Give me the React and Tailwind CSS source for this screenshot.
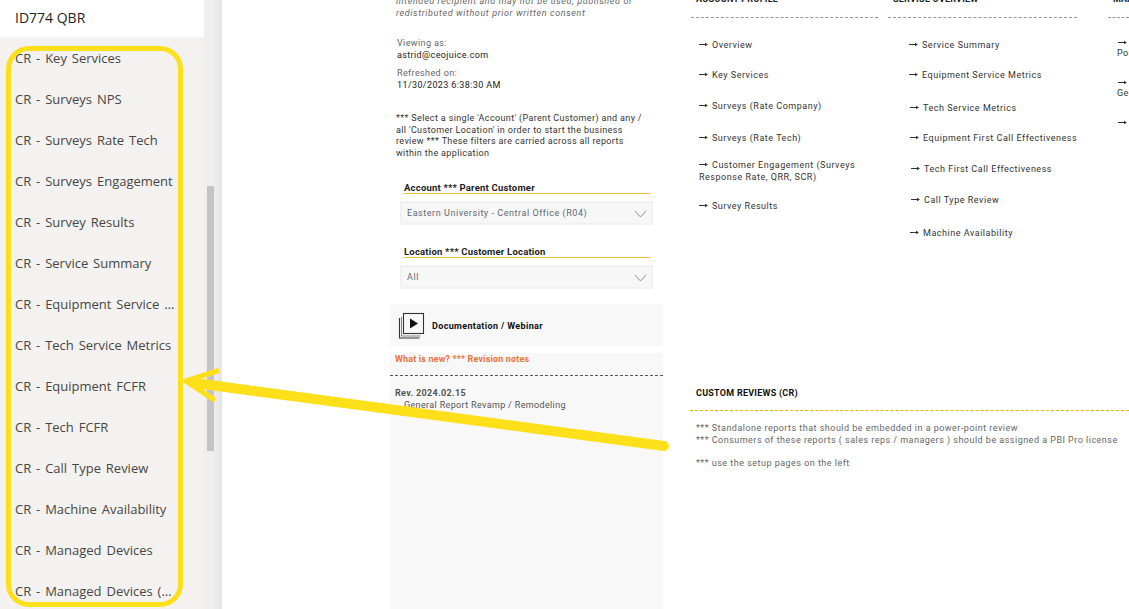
const items = ["CR - Key Services","CR - Surveys NPS","CR - Surveys Rate Tech","CR - Surveys Engagement","CR - Survey Results","CR - Service Summary","CR - Equipment Service Metrics","CR - Tech Service Metrics","CR - Equipment FCFR","CR - Tech FCFR","CR - Call Type Review","CR - Machine Availability","CR - Managed Devices","CR - Managed Devices (Detail)"];

const din = { fontFamily: '"Roboto", "Liberation Sans", sans-serif' };

function Arrow() {
  return (
    <svg width="9" height="5" viewBox="0 0 9 5" className="inline-block align-[1px]">
      <path d="M0 2.5h7" stroke="#333" strokeWidth="1" />
      <path d="M6 0.7L9 2.5L6 4.3z" fill="#333" />
    </svg>
  );
}

function Link({ text, mt, ml = 0, w }) {
  return (
    <div className="text-[9px] leading-[12px] text-[#333] tracking-[0.52px]" style={{ marginTop: mt, marginLeft: ml, width: w }}>
      <Arrow /><span className="ml-[4px]">{text}</span>
    </div>
  );
}

function Chevron() {
  return (
    <svg width="13" height="8" viewBox="0 0 13 8" className="shrink-0" fill="none" stroke="#7f8a96" strokeWidth="0.9">
      <path d="M1 1l5.5 6 5.5-6" />
    </svg>
  );
}

function Filter({ label, value, mt }) {
  return (
    <div style={{ marginTop: mt }}>
      <div className="ml-[14px] w-[246px] border-b border-[#efb93a] text-[9.5px] leading-[11px] font-bold text-[#222] tracking-[0.2px]">{label}</div>
      <div className="ml-[10px] mt-[7px] h-[24px] w-[253px] bg-[#f7f7f7] border-2 border-[#f1f1f1] flex items-center justify-between pl-[5px] pr-[4px] pt-[1px] text-[9px] text-[#5f6875] tracking-[0.55px]">
        <span>{value}</span>
        <Chevron />
      </div>
    </div>
  );
}

export default function App() {
  return (
    <div className="relative flex h-[609px] w-[1129px] overflow-hidden bg-white" style={din}>
      <aside className="flex h-full w-[222px] shrink-0 bg-[#f0efee]" style={{ fontFamily: '"Open Sans", "Noto Sans", sans-serif' }}>
        <div className="w-[204px] shrink-0 overflow-hidden bg-[#f3f2f1]">
          <div className="h-[37px] bg-white pl-[15px] text-[14px] leading-[35px] text-[#252423]">ID774 QBR</div>
          <div className="pl-[15px] pr-[28px] mt-[1px]">
            {items.map((t) => (
              <div key={t} className="h-[41px] truncate text-[13px] leading-[41px] text-[#484644] [word-spacing:1.5px]">{t}</div>
            ))}
          </div>
        </div>
        <div className="relative w-[18px] bg-gradient-to-r from-[#efefef] via-[#efefef] to-[#e4e4e4]">
          <div className="absolute left-[3px] top-[186px] h-[265px] w-[7px] bg-[#c4c4c4]" />
        </div>
      </aside>

      <main className="flex min-w-0 flex-1">
        <section className="ml-[168px] w-[273px] shrink-0">
          <p className="mt-[-4px] ml-[6px] w-[250px] text-[9px] leading-[11.5px] italic text-[#666] tracking-[0.62px]">intended recipient and may not be used, published or redistributed without prior written consent</p>
          <div className="ml-[7px] mt-[19px] text-[9px] leading-[11.5px] tracking-[0.38px]">
            <div className="text-[#666]">Viewing as:</div>
            <div className="text-[#222]">astrid@ceojuice.com</div>
            <div className="mt-[7px] text-[#666]">Refreshed on:</div>
            <div className="text-[#222]">11/30/2023 6:38:30 AM</div>
          </div>
          <p className="ml-[6px] mt-[22px] w-[252px] text-[9px] leading-[11.5px] text-[#333] tracking-[0.36px]">*** Select a single 'Account' (Parent Customer) and any / all 'Customer Location' in order to start the business review *** These filters are carried across all reports within the application</p>
          <Filter mt={23} label="Account *** Parent Customer" value="Eastern University - Central Office (R04)" />
          <Filter mt={21} label="Location *** Customer Location" value="All" />
          <div className="mt-[15px] flex h-[42px] items-center bg-[#f8f8f8]">
            <svg width="27" height="27" viewBox="0 0 27 27" className="ml-[8px]" fill="none" stroke="#333">
              <rect x="5.5" y="1.5" width="20" height="20" strokeWidth="1.1" />
              <path d="M1.5 6v20h20" strokeWidth="1.1" />
              <path d="M3.5 5v19h19" strokeWidth="0.6" />
              <path d="M12 6.5l8 5-8 5z" fill="#111" stroke="none" />
            </svg>
            <span className="ml-[7px] pt-[3px] text-[9px] font-bold text-[#111] tracking-[0.35px]">Documentation / Webinar</span>
          </div>
          <div className="mt-[7px] h-[260px] bg-[#f8f8f8]">
            <div className="pl-[5px] text-[9px] leading-[12px] font-bold text-[#f0703a] tracking-[0.15px]">What is new? *** Revision notes</div>
            <div className="mt-[10px] border-t border-dashed border-[#555]" />
            <div className="pl-[5px] mt-[11px] text-[9px] leading-[12px] tracking-[0.35px] text-[#555]">
              <div className="font-bold">Rev. 2024.02.15</div>
              <div className="pl-[9px]">General Report Revamp / Remodeling</div>
            </div>
          </div>
        </section>

        <section className="ml-[27px] min-w-0 flex-1">
          <div className="flex h-[387px]">
            <div className="w-[198px] shrink-0">
              <div className="mt-[-7px] h-[13px] pl-[6px] text-[9px] leading-[12px] font-bold text-[#222] tracking-[0.2px]">ACCOUNT PROFILE</div>
              <div className="mt-[11px] ml-[1px] w-[187px] border-t border-dashed border-[#999]" />
              <Link mt={21} ml={9} text="Overview" />
              <Link mt={18} ml={9} text="Key Services" />
              <Link mt={19} ml={9} text="Surveys (Rate Company)" />
              <Link mt={20} ml={9} text="Surveys (Rate Tech)" />
              <Link mt={15} ml={9} w={180} text="Customer Engagement (Surveys Response Rate, QRR, SCR)" />
              <Link mt={17} ml={9} text="Survey Results" />
            </div>
            <div className="w-[220px] shrink-0">
              <div className="mt-[-7px] h-[13px] pl-[5px] text-[9px] leading-[12px] font-bold text-[#222] tracking-[0.2px]">SERVICE OVERVIEW</div>
              <div className="mt-[11px] w-[189px] border-t border-dashed border-[#999]" />
              <Link mt={21} ml={21} text="Service Summary" />
              <Link mt={18} ml={21} text="Equipment Service Metrics" />
              <Link mt={21} ml={22} text="Tech Service Metrics" />
              <Link mt={18} ml={22} text="Equipment First Call Effectiveness" />
              <Link mt={19} ml={23} text="Tech First Call Effectiveness" />
              <Link mt={19} ml={23} text="Call Type Review" />
              <Link mt={21} ml={22} text="Machine Availability" />
            </div>
            <div className="flex-1 overflow-hidden whitespace-nowrap">
              <div className="mt-[-7px] h-[13px] pl-[5px] text-[9px] leading-[12px] font-bold text-[#222]">MANAGED</div>
              <div className="mt-[11px] border-t border-dashed border-[#999]" />
              <div className="mt-[17px] ml-[10px] h-[12px] leading-[12px]"><Arrow /></div>
              <div className="ml-[9px] text-[9px] leading-[12px] text-[#333] tracking-[0.4px]">Pos</div>
              <div className="mt-[16px] ml-[10px] h-[12px] leading-[12px]"><Arrow /></div>
              <div className="ml-[9px] text-[9px] leading-[12px] text-[#333] tracking-[0.4px]">Geo</div>
              <div className="mt-[16px] ml-[10px] h-[12px] leading-[12px]"><Arrow /></div>
            </div>
          </div>
          <div className="ml-[6px] h-[14px] text-[9px] leading-[12px] font-bold text-[#111] tracking-[0.25px]">CUSTOM REVIEWS (CR)</div>
          <div className="mt-[9px] border-t border-dashed border-[#f0b400]" />
          <div className="ml-[6px] mt-[11px] text-[9px] leading-[12px] text-[#666] tracking-[0.48px]">
            <div>*** Standalone reports that should be embedded in a power-point review</div>
            <div>*** Consumers of these reports ( sales reps / managers ) should be assigned a PBI Pro license</div>
            <div className="mt-[11px]">*** use the setup pages on the left</div>
          </div>
        </section>
      </main>

      <div className="pointer-events-none absolute left-[6px] top-[46px] h-[561px] w-[177px] rounded-[23px] border-[5px] border-[#fddf1a]" />
      <svg className="pointer-events-none absolute left-0 top-0" width="1129" height="609" fill="none">
        <path d="M664 446 L195 383" stroke="#fddf1a" strokeWidth="10" strokeLinecap="round" />
        <path d="M217 371 L186 381 L213 399" stroke="#fddf1a" strokeWidth="5.5" strokeLinecap="round" strokeLinejoin="round" />
      </svg>
    </div>
  );
}
